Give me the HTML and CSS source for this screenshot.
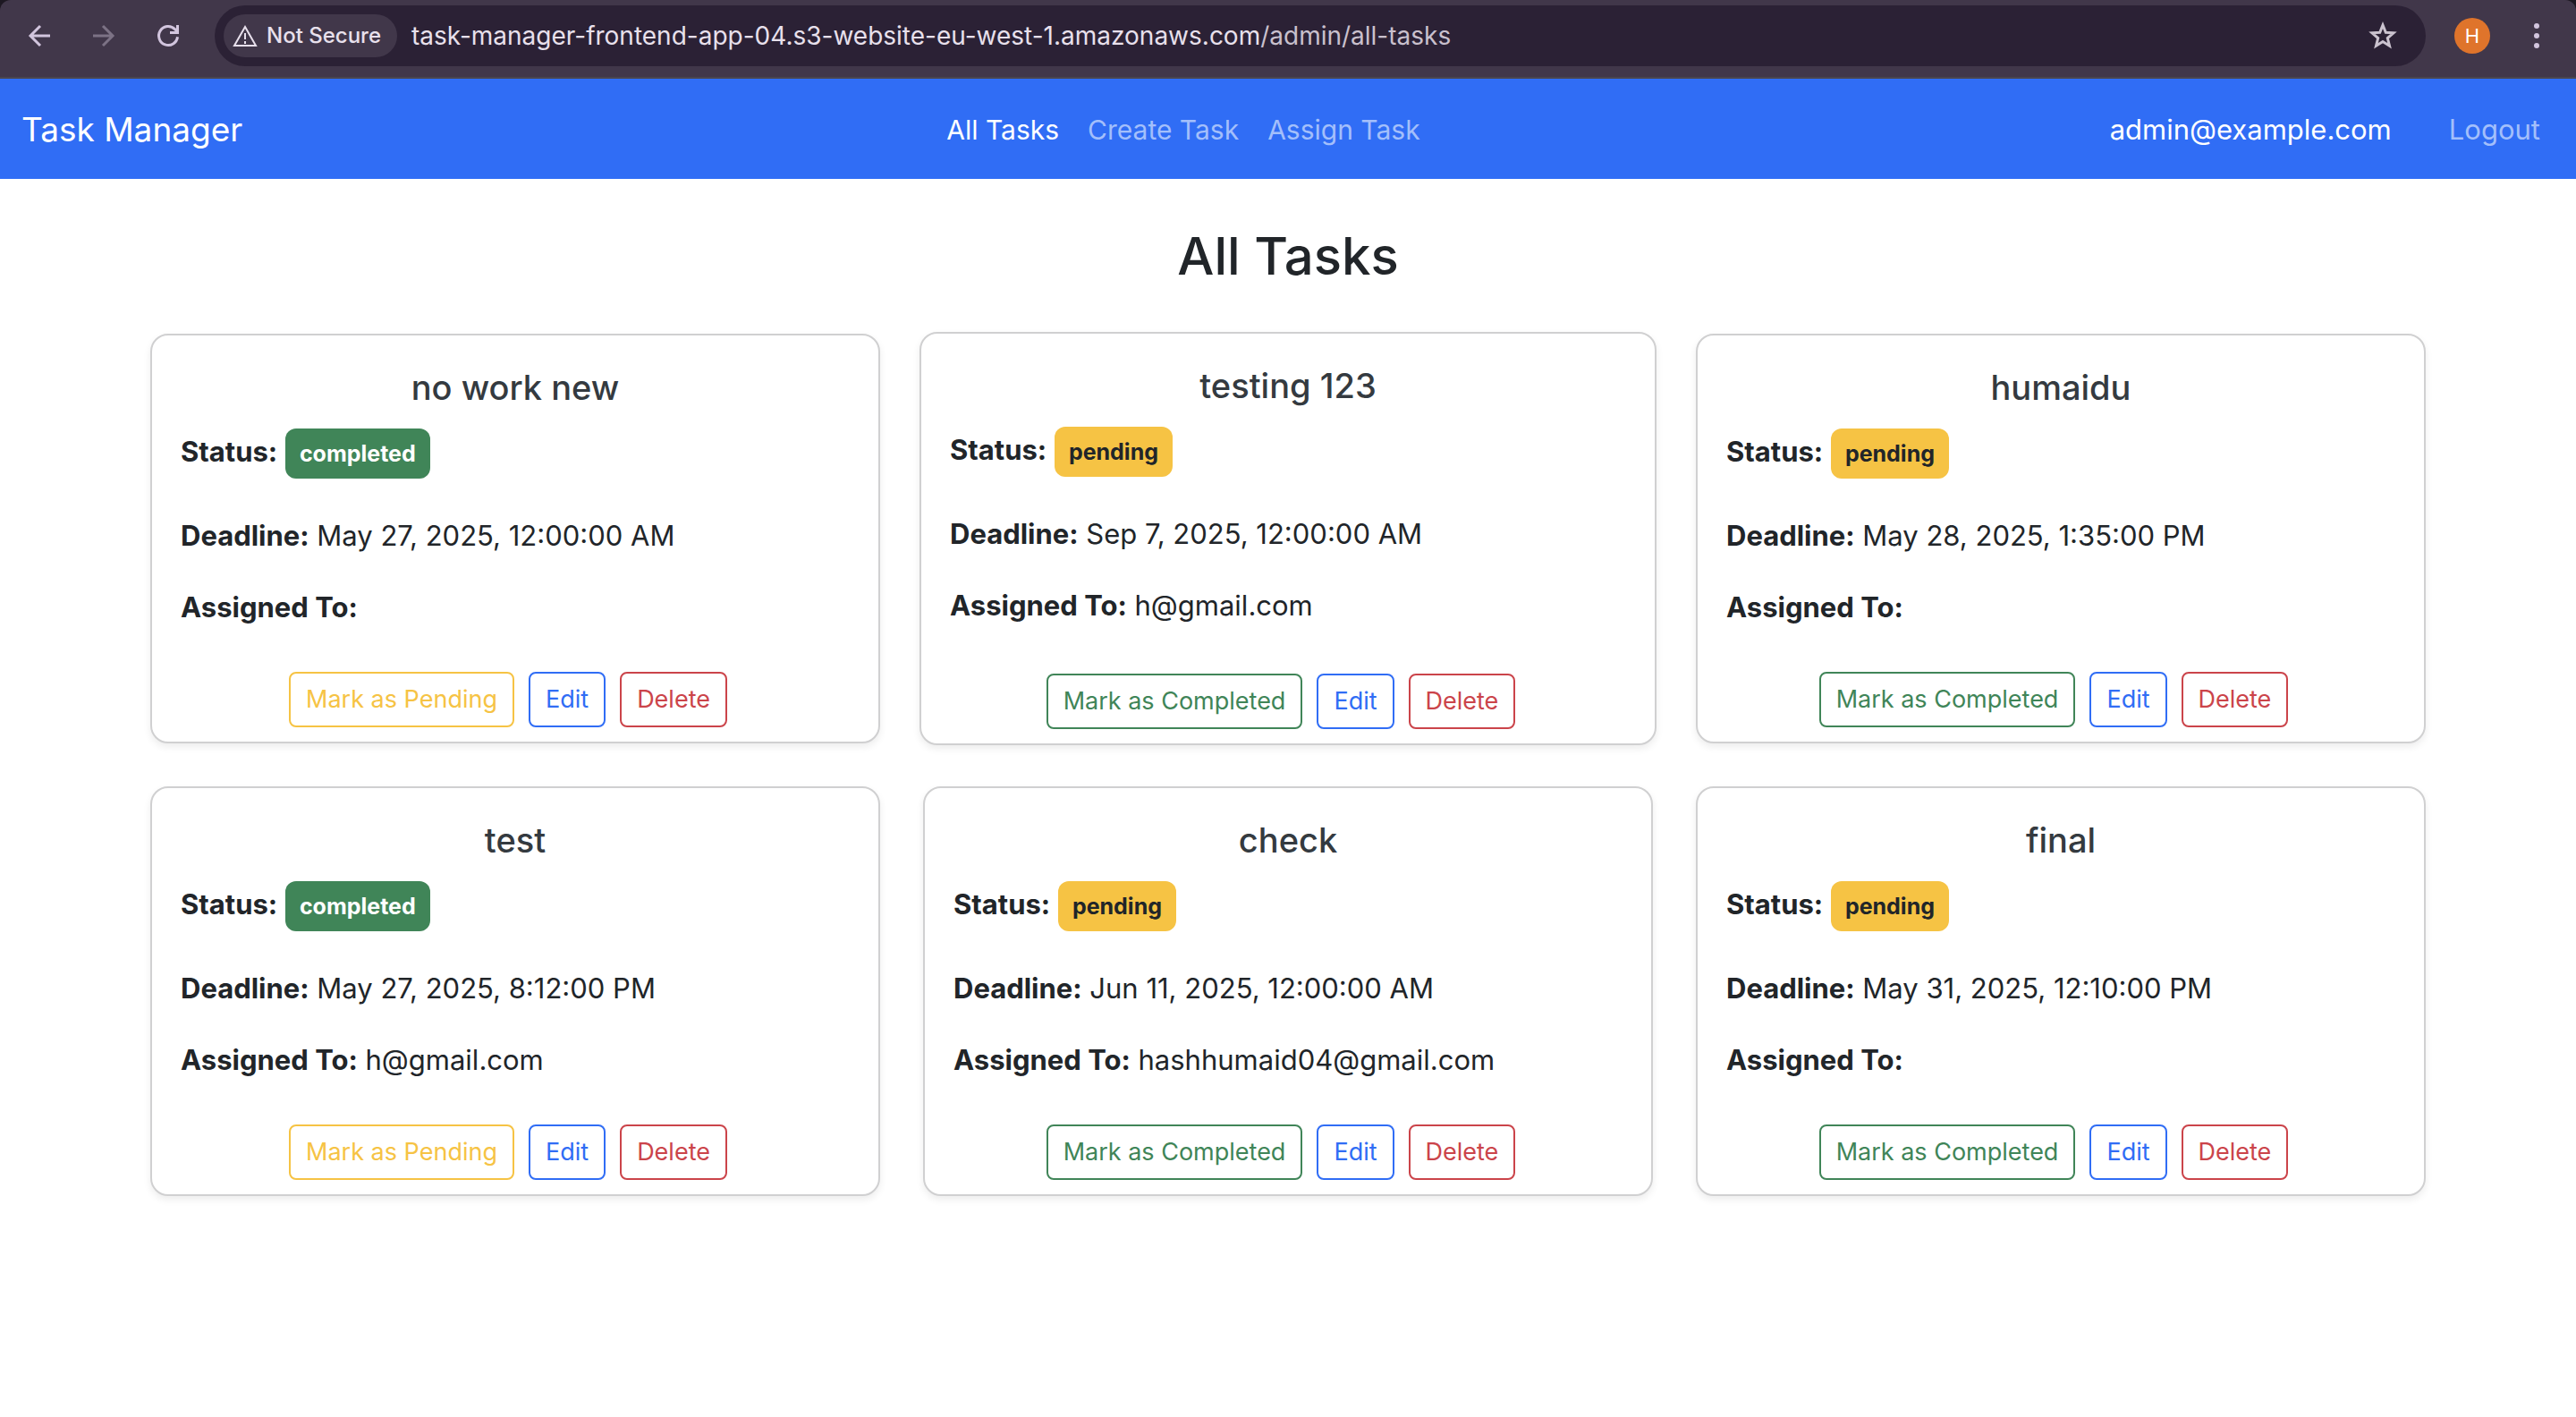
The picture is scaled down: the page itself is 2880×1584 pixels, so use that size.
FILE: index.html
```html
<!DOCTYPE html>
<html lang="en">
<head>
<meta charset="utf-8">
<title>Task Manager</title>
<link rel="stylesheet" href="styles.css">
</head>
<body>
<div class="window-top">
<div class="browser">
  <div class="tools">
    <button class="tool" type="button" aria-label="Back"><svg viewBox="0 0 32 32"><path d="M28 16H6M17 5L6 16L17 27"/></svg></button>
    <button class="tool tool-off" type="button" aria-label="Forward" disabled><svg viewBox="0 0 32 32"><path d="M4 16h22M15 5L26 16L15 27"/></svg></button>
    <button class="tool" type="button" aria-label="Reload"><svg viewBox="0 0 32 32"><path d="M26.500 17.300A10.500 10.500 0 1 1 23.500 8.600L26.500 11.500M26.500 4v8.500H18"/></svg></button>
  </div>
  <div class="address">
    <button class="chip" type="button"><svg viewBox="0 0 28 26"><path d="M14 3L26 24H2Z"/><path d="M14 10v7M14 19v3"/></svg>Not Secure</button>
    <span class="url">task-manager-frontend-app-04.s3-website-eu-west-1.amazonaws.com<span class="url-path">/admin/all-tasks</span></span>
    <button class="star" type="button" aria-label="Bookmark"><svg viewBox="0 0 32 32"><path d="M16 4L19.300 12.200L28 12.800L21.300 18.500L23.500 27.200L16 22.500L8.500 27.200L10.700 18.500L4 12.800L12.700 12.200Z"/></svg></button>
  </div>
  <button class="avatar" type="button">H</button>
  <button class="menu" type="button" aria-label="Menu"><svg viewBox="0 0 8 32"><circle cx="4" cy="5" r="3"/><circle cx="4" cy="16" r="3"/><circle cx="4" cy="27" r="3"/></svg></button>
</div>
</div>
<nav class="navbar">
  <a class="brand" href="#">Task Manager</a>
  <div class="nav-links">
    <a class="nav-link active" href="#">All Tasks</a>
    <a class="nav-link" href="#">Create Task</a>
    <a class="nav-link" href="#">Assign Task</a>
  </div>
  <div class="account">
    <span>admin@example.com</span>
    <a class="nav-link" href="#">Logout</a>
  </div>
</nav>
<main class="container">
  <h1 class="page-title">All Tasks</h1>
  <div class="grid">
    <article class="card">
      <h2 class="card-title">no work new</h2>
      <p class="status"><strong>Status:</strong> <span class="badge done">completed</span></p>
      <p class="line"><strong>Deadline:</strong> May 27, 2025, 12:00:00 AM</p>
      <p class="line"><strong>Assigned To:</strong></p>
      <div class="actions"><button class="btn warning" type="button">Mark as Pending</button><button class="btn primary" type="button">Edit</button><button class="btn danger" type="button">Delete</button></div>
    </article>
    <article class="card raised">
      <h2 class="card-title">testing 123</h2>
      <p class="status"><strong>Status:</strong> <span class="badge">pending</span></p>
      <p class="line"><strong>Deadline:</strong> Sep 7, 2025, 12:00:00 AM</p>
      <p class="line"><strong>Assigned To:</strong> h@gmail.com</p>
      <div class="actions"><button class="btn success" type="button">Mark as Completed</button><button class="btn primary" type="button">Edit</button><button class="btn danger" type="button">Delete</button></div>
    </article>
    <article class="card">
      <h2 class="card-title">humaidu</h2>
      <p class="status"><strong>Status:</strong> <span class="badge">pending</span></p>
      <p class="line"><strong>Deadline:</strong> May 28, 2025, 1:35:00 PM</p>
      <p class="line"><strong>Assigned To:</strong></p>
      <div class="actions"><button class="btn success" type="button">Mark as Completed</button><button class="btn primary" type="button">Edit</button><button class="btn danger" type="button">Delete</button></div>
    </article>
    <article class="card">
      <h2 class="card-title">test</h2>
      <p class="status"><strong>Status:</strong> <span class="badge done">completed</span></p>
      <p class="line"><strong>Deadline:</strong> May 27, 2025, 8:12:00 PM</p>
      <p class="line"><strong>Assigned To:</strong> h@gmail.com</p>
      <div class="actions"><button class="btn warning" type="button">Mark as Pending</button><button class="btn primary" type="button">Edit</button><button class="btn danger" type="button">Delete</button></div>
    </article>
    <article class="card">
      <h2 class="card-title">check</h2>
      <p class="status"><strong>Status:</strong> <span class="badge">pending</span></p>
      <p class="line"><strong>Deadline:</strong> Jun 11, 2025, 12:00:00 AM</p>
      <p class="line"><strong>Assigned To:</strong> hashhumaid04@gmail.com</p>
      <div class="actions"><button class="btn success" type="button">Mark as Completed</button><button class="btn primary" type="button">Edit</button><button class="btn danger" type="button">Delete</button></div>
    </article>
    <article class="card">
      <h2 class="card-title">final</h2>
      <p class="status"><strong>Status:</strong> <span class="badge">pending</span></p>
      <p class="line"><strong>Deadline:</strong> May 31, 2025, 12:10:00 PM</p>
      <p class="line"><strong>Assigned To:</strong></p>
      <div class="actions"><button class="btn success" type="button">Mark as Completed</button><button class="btn primary" type="button">Edit</button><button class="btn danger" type="button">Delete</button></div>
    </article>
  </div>
</main>
</body>
</html>
```
FILE: styles.css
```css
* { box-sizing: border-box; }
body {
  margin: 0;
  background: #fff;
  color: #212529;
  font-family: Inter, "Liberation Sans", sans-serif;
  font-size: 31px;
  line-height: 48px;
}
h1, h2, p { margin: 0; }
a { color: inherit; text-decoration: none; }
button { font-family: inherit; cursor: pointer; }
svg { display: block; fill: none; stroke: currentColor; }

/* Browser toolbar */
.window-top { background: #1d1822; }
.browser {
  display: flex;
  align-items: center;
  padding: 6px 40px 12px 28px;
  border-bottom: 2px solid #4a464e;
  border-radius: 12px 12px 0 0;
  background: #41374a;
  color: #d2c5de;
}
.browser button { border: 0; padding: 0; background: none; color: inherit; }
.tools { display: flex; gap: 40px; margin-right: 36px; }
.tool svg { width: 32px; height: 32px; stroke-width: 3; }
.browser .tool-off { color: #7c7285; }
.address {
  flex: 1;
  display: flex;
  align-items: center;
  padding: 10px 32px 10px 10px;
  border-radius: 34px;
  background: #2b2135;
}
.browser .chip {
  display: flex;
  align-items: center;
  gap: 10px;
  margin-right: 16px;
  padding: 0 18px 0 10px;
  border-radius: 24px;
  background: #41374a;
  color: #e8e0ec;
  font-size: 24px;
  font-weight: 500;
  line-height: 48px;
}
.chip svg { width: 28px; height: 26px; stroke-width: 2; }
.url { flex: 1; color: #e8e0ec; font-size: 28px; }
.url-path { color: #c9c0cd; }
.star svg { width: 32px; height: 32px; stroke-width: 3; color: #cbc3cf; }
.browser .avatar {
  width: 40px;
  height: 40px;
  margin: 0 48px 0 32px;
  border-radius: 50%;
  background: #df742b;
  color: #fff;
  font-size: 22px;
  line-height: 40px;
}
.menu svg { width: 8px; height: 32px; fill: currentColor; stroke: none; }

/* Site navigation */
.navbar {
  display: flex;
  justify-content: space-between;
  align-items: center;
  padding: 33px 40px 31px 24px;
  background: #306df5;
  color: #fff;
}
.brand { margin-right: 16px; font-size: 37px; }
.nav-links { display: flex; gap: 32px; font-size: 30px; }
.nav-link { color: #a3bffb; }
.nav-link.active { color: #fff; }
.account { display: flex; gap: 64px; }

/* Task list */
.container { max-width: 2640px; margin: 0 auto; padding: 48px; }
.page-title {
  margin-bottom: 48px;
  font-size: 58px;
  font-weight: 500;
  line-height: 77px;
  text-align: center;
}
.grid { display: grid; grid-template-columns: repeat(3, 1fr); gap: 48px; }
.card {
  display: flex;
  flex-direction: column;
  padding: 32px 32px 16px;
  border: 2px solid #d0d0d1;
  border-radius: 20px;
  background: #fff;
  box-shadow: 0 4px 8px rgba(0, 0, 0, 0.075);
}
.raised { margin: -2px -4px; }
.card-title {
  margin-bottom: 18px;
  color: #343a40;
  font-size: 38px;
  font-weight: 500;
  line-height: 52px;
  text-align: center;
}
.status { margin-bottom: 40px; line-height: 56px; }
.badge {
  display: inline-block;
  padding: 16px;
  border-radius: 12px;
  background: #f6c344;
  color: #212529;
  font-size: 25px;
  font-weight: 700;
  line-height: 24px;
}
.badge.done { background: #408558; color: #fff; }
.line { margin-bottom: 32px; }
.actions {
  display: flex;
  justify-content: center;
  margin-top: auto;
  padding-top: 16px;
}
.btn {
  margin-right: 16px;
  padding: 8px 17px;
  border: 2px solid currentColor;
  border-radius: 8px;
  background: none;
  font-size: 27px;
  line-height: 42px;
}
.warning { color: #f6c344; }
.success { color: #408558; }
.primary { color: #306df5; }
.danger { color: #cb444a; }
```
